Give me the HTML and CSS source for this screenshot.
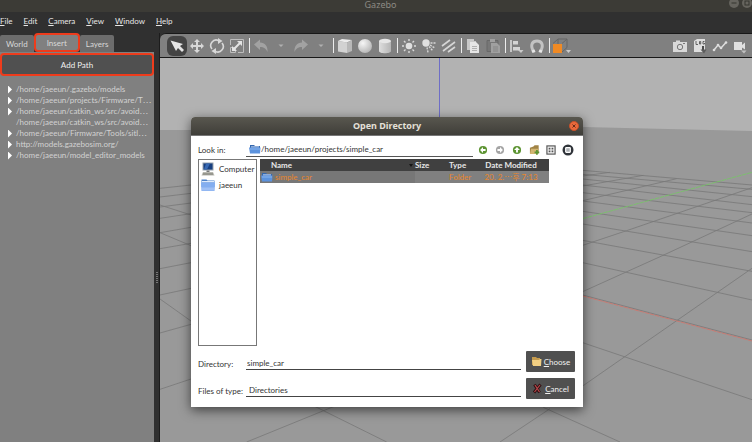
FILE: index.html
```html
<!DOCTYPE html>
<html lang="en">
<head>
<meta charset="utf-8">
<title>Gazebo</title>
<link rel="stylesheet" href="styles.css">
</head>
<body>
<div class="app">
  <header class="titlebar">
    <span class="app-name">Gazebo</span>
    <span class="window-buttons">
      <button aria-label="Minimize"><svg width="10" height="10" viewBox="0 0 10 10"><circle cx="5" cy="5" r="5" fill="#66645e"/><path d="M2.500 5h5" stroke="#35342f"/></svg></button>
      <button aria-label="Maximize"><svg width="10" height="10" viewBox="0 0 10 10"><circle cx="5" cy="5" r="5" fill="#66645e"/><rect x="3" y="3" width="4" height="4" fill="none" stroke="#35342f"/></svg></button>
    </span>
  </header>
  <nav class="menubar">
    <button><u>F</u>ile</button>
    <button><u>E</u>dit</button>
    <button><u>C</u>amera</button>
    <button><u>V</u>iew</button>
    <button><u>W</u>indow</button>
    <button><u>H</u>elp</button>
  </nav>
  <main class="workspace">
    <aside class="side">
      <div class="tabs">
        <button class="tab">World</button>
        <button class="tab tab-active">Insert</button>
        <button class="tab">Layers</button>
      </div>
      <div class="panel">
        <button class="add-path">Add Path</button>
        <ul class="tree">
          <li class="branch">/home/jaeeun/.gazebo/models</li>
          <li class="branch">/home/jaeeun/projects/Firmware/T⋯</li>
          <li class="branch">/home/jaeeun/catkin_ws/src/avoid⋯</li>
          <li>/home/jaeeun/catkin_ws/src/avoid⋯</li>
          <li class="branch">/home/jaeeun/Firmware/Tools/sitl⋯</li>
          <li class="branch">http://models.gazebosim.org/</li>
          <li class="branch">/home/jaeeun/model_editor_models</li>
        </ul>
      </div>
    </aside>
    <div class="splitter"><span class="grip"></span></div>
    <section class="view">
      <div class="toolbar">
        <button class="tool tool-on" aria-label="Select"><svg viewBox="0 0 16 16"><path d="M1.500 2.500 14 6l-3 2 4 4-2 2-4-4-2 3z" fill="#e4e4e4"/></svg></button>
        <button class="tool" aria-label="Translate"><svg viewBox="0 0 16 16"><path d="M8 1l3 3H9v3h3V5l3 3-3 3V9H9v3h2l-3 3-3-3h2V9H4v2L1 8l3-3v2h3V4H5z" fill="#d8d8d8"/></svg></button>
        <button class="tool" aria-label="Rotate"><svg viewBox="0 0 16 16"><path d="M3 11A5.500 5.500 0 0 1 9.500 2.500M13 5A5.500 5.500 0 0 1 6.500 13.500" fill="none" stroke="#d8d8d8" stroke-width="1.600"/><path d="M9 0l4.500 3L9 6zM7 10l-4.500 3L7 16z" fill="#d8d8d8"/></svg></button>
        <button class="tool" aria-label="Scale"><svg viewBox="0 0 16 16"><path d="M1.500 7V1.500h13v13H9M1.500 9.500h5v5h-5z" fill="none" stroke="#bdbdbd"/><path d="M5 11l6-6" stroke="#e4e4e4" stroke-width="2"/><path d="M8 3h5v5zM3 8v5h5z" fill="#e4e4e4"/></svg></button>
        <span class="sep"></span>
        <button class="tool" aria-label="Undo"><svg viewBox="0 0 16 16"><path d="M1 6.500 7 1.500v3c5 0 8 4 7.500 9.500C13 10.500 11 9 7 9v3z" fill="#a2a2a2"/></svg></button>
        <button class="tool" aria-label="Undo history"><svg viewBox="0 0 16 16"><path d="M5.500 6.500h5L8 9z" fill="#b0b0b0"/></svg></button>
        <button class="tool" aria-label="Redo"><svg viewBox="0 0 16 16"><path d="M15 6.500 9 1.500v3C4 4.500 1 8.500 1.500 14 3 10.500 5 9 9 9v3z" fill="#a2a2a2"/></svg></button>
        <button class="tool" aria-label="Redo history"><svg viewBox="0 0 16 16"><path d="M5.500 6.500h5L8 9z" fill="#b0b0b0"/></svg></button>
        <span class="sep"></span>
        <button class="tool" aria-label="Box"><svg viewBox="0 0 16 16"><path d="M1 3l9 1.500V15L1 13.500z" fill="#d2d2d2"/><path d="M1 3l4-2 10 1-5 2.500z" fill="#ececec"/><path d="M10 4.500 15 2v11l-5 2z" fill="#b8b8b8"/></svg></button>
        <button class="tool" aria-label="Sphere"><svg viewBox="0 0 16 16"><defs><radialGradient id="ball" cx=".35" cy=".3" r=".7"><stop offset="0" stop-color="#f6f6f6"/><stop offset="1" stop-color="#bababa"/></radialGradient></defs><circle cx="8" cy="8" r="7" fill="url(#ball)"/></svg></button>
        <button class="tool" aria-label="Cylinder"><svg viewBox="0 0 16 16"><defs><linearGradient id="can"><stop offset="0" stop-color="#dedede"/><stop offset="1" stop-color="#b5b5b5"/></linearGradient></defs><path d="M2 3v10c0 3 12 3 12 0V3z" fill="url(#can)"/><ellipse cx="8" cy="3" rx="6" ry="2.200" fill="#e6e6e6"/></svg></button>
        <span class="sep"></span>
        <button class="tool" aria-label="Point light"><svg viewBox="0 0 16 16"><circle cx="8" cy="8" r="3.300" fill="#e0e0e0"/><path d="M8 1v2M8 13v2M1 8h2M13 8h2M3 3l1.500 1.500M11.500 11.500 13 13M13 3l-1.500 1.500M4.500 11.500 3 13" stroke="#dadada" stroke-width="1.400"/></svg></button>
        <button class="tool" aria-label="Spot light"><svg viewBox="0 0 16 16"><circle cx="5" cy="5" r="3.700" fill="#e0e0e0"/><path d="M9.500 5h5M9 7l5 3M8 8.500l4 4.500M6 9.500l1 5" stroke="#d6d6d6" stroke-width="1.400" stroke-dasharray="2 1"/></svg></button>
        <button class="tool" aria-label="Directional light"><svg viewBox="0 0 16 16"><path d="M1 8l8-6M2 13 14 4M7 14l7-5" stroke="#d6d6d6" stroke-width="1.600"/></svg></button>
        <span class="sep"></span>
        <button class="tool" aria-label="Copy"><svg viewBox="0 0 16 16"><path d="M2 1h7v2h2v9H2z" fill="#c9c9c9"/><path d="M5 4h6l3 3v8H5z" fill="#e6e6e6"/><path d="M7 8.500h5M7 10.500h5M7 12.500h5" stroke="#b0b0b0"/></svg></button>
        <button class="tool" aria-label="Paste"><svg viewBox="0 0 16 16"><path d="M2 2.500h11v11H2z" fill="#777" stroke="#686868"/><path d="M5 1h5v3H5zM6 5h6l3 3v7H6z" fill="#a0a0a0"/><path d="M8 9h5M8 11h5M8 13h5" stroke="#868686"/></svg></button>
        <span class="sep"></span>
        <button class="tool" aria-label="Align"><svg viewBox="0 0 16 16"><path d="M2 2v12" stroke="#dedede" stroke-width="1.500"/><path d="M4 3h5v3.500H4zM4 9h7v3.500H4z" fill="#d4d4d4"/><path d="M9 12h5.500L12 15z" fill="#cacaca"/></svg></button>
        <button class="tool" aria-label="Snap"><svg viewBox="0 0 16 16"><path d="M4.500 13.500C.5 6 4 3 8 3s7.500 3 3.500 10.500" fill="none" stroke="#c2c2c2" stroke-width="3"/><path d="M2.500 12.500l3-1 1 2.500-3 1zM13.500 12.500l-3-1-1 2.500 3 1z" fill="#e6e6e6"/></svg></button>
        <span class="sep"></span>
        <button class="tool" aria-label="View angle"><svg class="wide-icon" viewBox="0 0 19 16"><path d="M1 5.500 6 1h9L10 5.500M15 1v8.500L10 14M6 1v5" fill="none" stroke="#656565"/><path d="M1 6h9v9H1z" fill="#f08a24"/><path d="M14 12h5l-2.500 3z" fill="#cacaca"/></svg></button>
        <span class="spring"></span>
        <button class="tool" aria-label="Screenshot"><svg viewBox="0 0 16 16"><path d="M1 4h3V2.500h4V4h7v10H1z" fill="#d9d9d9"/><circle cx="8" cy="9" r="2.700" fill="#d9d9d9" stroke="#777"/><path d="M11 5.500h2" stroke="#777"/></svg></button>
        <button class="tool" aria-label="Log data"><svg viewBox="0 0 16 16"><path d="M2 3l3-2h8v13H2z" fill="#dedede"/><path d="M4 3v3.500h2M7.500 3.500h1.200v2.500H7.500zM12.500 3.500H11V6h1.500V5" fill="none" stroke="#555" stroke-width=".9"/><path d="M11 8v4" stroke="#4a4a4a" stroke-width="2"/><path d="M8.500 11.500h6L12 15.500z" fill="#5c5c5c"/></svg></button>
        <button class="tool" aria-label="Plot"><svg viewBox="0 0 16 16"><path d="M2 12l4-5 3 3 5-5.500" fill="none" stroke="#dedede" stroke-width="1.500"/><circle cx="2" cy="12" r="1.300" fill="#dedede"/><circle cx="6" cy="7" r="1.300" fill="#dedede"/><circle cx="9" cy="10" r="1.300" fill="#dedede"/><circle cx="14" cy="4.500" r="1.300" fill="#dedede"/></svg></button>
        <button class="tool" aria-label="Record video"><svg viewBox="0 0 16 16"><path d="M2 4h8v3l3-2.500v7L10 9.500V12H2z" fill="#e0e0e0"/><path d="M9 12.500h5.500L12 15.500z" fill="#c0c0c0"/></svg></button>
      </div>
      <svg class="scene" viewBox="160 58 592 384" preserveAspectRatio="xMinYMin slice" aria-hidden="true">
        <rect x="160" y="58" width="592" height="384" fill="#b2b2b2"/>
        <path d="M160 130H191L583 127 752 131V442H160z" fill="#999"/>
        <path d="M439.500 58v70" stroke="#6e6ec6"/>
        <g transform="translate(560 50) scale(.33333)" fill="none" stroke="#7a7a7a" stroke-width="2.500">
          <path d="M68 361 576 405M68 373 576 418M68 387 576 440M68 405 576 464M68 428 576 488M68 453 576 519M68 484 576 557M68 522 576 605M68 571 576 664M68 638 576 750M68 735 576 870M68 878 576 1049M-50 1072 180 1176"/>
          <path d="M68 378 150 367M68 408 250 376M68 452 350 386M68 586 200 542 576 413M68 725 305 618 576 492M68 1008 576 655M-30 1076-180 1176"/>
          <path d="M68 738 576 873" stroke="#d2756b" stroke-dasharray="14 2"/>
          <path d="M68 506 576 367" stroke="#76c765" stroke-dasharray="14 2"/>
        </g>
        <g transform="translate(130 240) scale(.33333)" fill="none" stroke="#7a7a7a" stroke-width="2.500">
          <path d="M90 26 183 10M90 86 183 68M90 165 183 145M90 279 183 253M90 448 183 417M90 177 183 243M90-22 183 17M90-22 183-38M90-65 183-79M90-99 183-111M90-129 183-140M90-155 183-165M90-105 183-75M350 606 630 492M540 492 770 606"/>
        </g>
      </svg>
    </section>
  </main>

  <form class="dialog" role="dialog" aria-labelledby="dialog-title">
    <div class="dialog-bar">
      <span id="dialog-title" class="dialog-title">Open Directory</span>
      <button type="button" class="close" aria-label="Close"><svg width="10" height="10" viewBox="0 0 10 10"><circle cx="5" cy="5" r="4.500" fill="#ea6a3c" stroke="#c4502b"/><path d="M3.500 3.500l3 3m0-3l-3 3" stroke="#6a2b18"/></svg></button>
    </div>
    <div class="dialog-body">
      <div class="look-row">
        <label class="label" for="look">Look in:</label>
        <div class="path-field">
          <svg width="12" height="10" viewBox="0 0 12 10"><path d="M1 1h4l1 1h5v5H1z" fill="#3467ae"/><path d="M2 2.500h8v1H2z" fill="#e8f0fc"/><path d="M0 3.500h11.500L11 9.500H1z" fill="#5b92dd"/><path d="M1 5h10" stroke="#8ab5ee"/></svg>
          <input id="look" type="text" value="/home/jaeeun/projects/simple_car">
        </div>
        <div class="nav-buttons">
          <button type="button" aria-label="Back"><svg viewBox="0 0 12 12"><circle cx="6" cy="6" r="3.500" fill="#5d9432"/><path d="M3.500 6 6 3.500v1.700h2.200v1.600H6v1.700z" fill="#fff"/></svg></button>
          <button type="button" aria-label="Forward"><svg viewBox="0 0 12 12"><circle cx="6" cy="6" r="3.500" fill="#a4a4a4"/><path d="M8.500 6 6 3.500v1.700H3.800v1.600H6v1.700z" fill="#fff"/></svg></button>
          <button type="button" aria-label="Parent directory"><svg viewBox="0 0 12 12"><circle cx="6" cy="6" r="3.500" fill="#5d9432"/><path d="M6 3.500 3.500 6h1.700v2.200h1.600V6h1.700z" fill="#fff"/></svg></button>
          <button type="button" aria-label="New folder"><svg viewBox="0 0 12 12"><path d="M2.500 4l3-1 1-1H10v7H2.500z" fill="#a18446"/><path d="M3.500 5H10L8 9.500H2.500z" fill="#d3b571"/><path d="M8.500 6v4M6.500 8h4" stroke="#5d9432" stroke-width="1.500"/></svg></button>
          <button type="button" aria-label="List view"><svg viewBox="0 0 12 12"><rect x="2.500" y="2.500" width="7" height="7" fill="#f5f5f5" stroke="#555"/><path d="M4 4h1.500v1.500H4zM6.500 4H8v1.500H6.500zM4 6.500h1.500V8H4zM6.500 6.500H8V8H6.500z" fill="#555"/></svg></button>
          <button type="button" aria-label="Detail view"><svg viewBox="0 0 12 12"><circle cx="6" cy="6" r="4.700" fill="#30343a"/><rect x="3.500" y="3.500" width="5" height="5" rx="1" fill="#fff"/><path d="M4.500 5.200h3M4.500 6.800h3" stroke="#646a72" stroke-width=".8"/></svg></button>
        </div>
      </div>
      <div class="browser">
        <ul class="places">
          <li><svg width="14" height="14" viewBox="0 0 14 14"><path d="M1.500.5h11v8h-11z" fill="#98a2ac"/><path d="M2.500 1.500h9v6h-9z" fill="#173f80"/><path d="M5 1.500h4l-3 6H3z" fill="#3769b3"/><path d="M5.500 8.500h3v1.500h-3z" fill="#777"/><path d="M2 10h10l1.500 3.500H.5z" fill="#b8b8b0"/><path d="M2 12h10" stroke="#77776f"/></svg>Computer</li>
          <li><svg width="14" height="14" viewBox="0 0 14 14"><path d="M.5 1.500h5l1 1h7V9H.5z" fill="#4d82c9"/><path d="M1 3h12v1.500H1z" fill="#e0ebfb"/><path d="M0 4.500h14L13.500 13H.5z" fill="#84aef0"/><path d="M1 9.500h12v3H1z" fill="#a0c0f5"/></svg>jaeeun</li>
        </ul>
        <div class="files">
          <table>
            <colgroup><col class="c-name"><col class="c-size"><col class="c-type"><col class="c-date"></colgroup>
            <thead><tr><th class="name-head">Name<span class="sort"></span></th><th>Size</th><th>Type</th><th>Date Modified</th></tr></thead>
            <tbody><tr><td class="name-cell"><svg width="12" height="10" viewBox="0 0 12 10"><path d="M1 1h4l1 1h5v5H1z" fill="#3467ae"/><path d="M2 2.500h8v1H2z" fill="#e8f0fc"/><path d="M0 3.500h11.500L11 9.500H1z" fill="#5b92dd"/><path d="M1 5h10" stroke="#8ab5ee"/></svg>simple_car</td><td></td><td>Folder</td><td>20. 2.⋯후 7:13</td></tr></tbody>
          </table>
        </div>
      </div>
      <div class="choice">
        <label class="label" for="directory">Directory:</label>
        <input id="directory" class="line-field" type="text" value="simple_car">
        <button type="button" class="action"><svg width="11" height="11" viewBox="0 0 11 11"><path d="M1 1h4l1 1h3v7H1z" fill="#c59b4e"/><path d="M1 4h7l1-1h1.500L10 10H2z" fill="#f2cf83"/></svg><span><u>C</u>hoose</span></button>
        <label class="label" for="types">Files of type:</label>
        <select id="types" class="line-field type-field"><option>Directories</option></select>
        <button type="button" class="action"><svg width="11" height="11" viewBox="0 0 11 11"><path d="M2.500 1.500 7.500 9.500M8.500 1.500 2 9.500" stroke="#301012" stroke-width="3"/><path d="M3 2l4.500 7M8 2 2.500 9" stroke="#b8474b" stroke-width="1.200"/></svg><span><u>C</u>ancel</span></button>
      </div>
    </div>
  </form>
</div>
</body>
</html>
```
FILE: styles.css
```css
* { box-sizing: border-box; }

body {
  margin: 0;
  background: #303030;
  font-family: Lato, "Noto Sans CJK KR", sans-serif;
  font-size: 8px;
  line-height: 12px;
}

button, input, select {
  margin: 0;
  padding: 0;
  border: 0;
  background: none;
  color: inherit;
  font: inherit;
}

ul { margin: 0; padding: 0; list-style: none; }
svg { display: block; flex: none; }
u { text-underline-offset: 1px; }

.app {
  position: relative;
  display: flex;
  flex-direction: column;
  height: 100vh;
  overflow: hidden;
}

/* Main window frame */
.titlebar {
  display: flex;
  flex: none;
  height: 12px;
  padding-left: 9px;
  background: #3c3b36;
  color: #8c8a84;
  font-family: "Noto Sans", sans-serif;
  font-size: 9px;
  line-height: 9px;
}
.app-name { flex: 1; text-align: center; }
.window-buttons {
  position: absolute;
  top: -2px;
  right: 0;
  display: flex;
  gap: 3px;
}

.menubar {
  display: flex;
  flex: none;
  gap: 11px;
  height: 21px;
  padding-bottom: 4px;
  align-items: center;
  background: #303030;
  color: #e6e6e6;
}

.workspace { display: flex; flex: 1; min-height: 0; }

/* Left panel */
.side { display: flex; flex: none; flex-direction: column; width: 154px; }
.tabs { display: flex; height: 19px; align-items: flex-end; }
.tab {
  height: 17px;
  padding: 0 6px;
  border-radius: 2px 2px 0 0;
  background: #6c6c6c;
  color: #d8d8d8;
}
.tab-active {
  height: 19px;
  padding: 0 11px;
  border: 2px solid #ee3c1c;
  border-radius: 4px;
  background: #808080;
}
.panel { flex: 1; padding-top: 1px; background: #808080; }
.add-path {
  display: block;
  width: 100%;
  height: 23px;
  border: 2px solid #ee3c1c;
  border-radius: 4px;
  background: #505050;
  color: #f0f0f0;
}
.tree { padding: 8px 0 0 8px; color: #d2d2d2; line-height: 11px; }
.tree li { padding-left: 8px; white-space: nowrap; }
.tree .branch { padding-left: 0; display: flex; align-items: center; }
.branch::before {
  content: "";
  flex: none;
  width: 4px;
  height: 8px;
  margin-right: 4px;
  background: #fff;
  clip-path: polygon(0 0, 100% 50%, 0 100%);
}

.splitter {
  display: flex;
  flex: none;
  width: 6px;
  padding-top: 80px;
  align-items: center;
  justify-content: center;
  background: #303030;
  border-right: 1px solid #1c1c1c;
}
.grip {
  width: 2px;
  height: 11px;
  background: repeating-linear-gradient(#777 0 1px, #303030 1px 2px);
}

/* 3D view */
.view { display: flex; flex: 1; flex-direction: column; min-width: 0; }
.toolbar {
  display: flex;
  flex: none;
  height: 25px;
  padding: 0 2px 0 7px;
  align-items: center;
  border-top: 1px solid #181818;
  border-bottom: 1px solid #181818;
  border-radius: 6px 0 0 0;
  background: #808080;
}
.tool {
  display: flex;
  flex: none;
  width: 20px;
  height: 20px;
  align-items: center;
  justify-content: center;
}
.tool svg { width: 16px; height: 16px; }
.tool .wide-icon { width: 19px; height: 16px; }
.tool-on { border-radius: 6px; background: #444; }
.sep { flex: none; width: 1px; height: 15px; margin: 0 1px 0 2px; background: #ececec; }
.spring { flex: 1; }
.scene { flex: 1; width: 100%; min-height: 0; }

/* File dialog */
.dialog {
  position: absolute;
  top: 117px;
  left: 191px;
  width: 392px;
  border-radius: 4px 4px 0 0;
  background: #fff;
  color: #333;
  box-shadow: 0 3px 12px rgba(0, 0, 0, .6);
}
.dialog-bar {
  display: flex;
  height: 19px;
  padding: 0 4px 0 14px;
  align-items: center;
  border-bottom: 1px solid #777;
  border-radius: 4px 4px 0 0;
  background: linear-gradient(#59574f, #3f3e39);
  color: #e4e0d8;
}
.dialog-title {
  flex: 1;
  font-family: "Noto Sans", sans-serif;
  font-size: 9px;
  font-weight: 700;
  text-align: center;
}
.dialog-body { padding: 6px 8px 8px 7px; }
.label { width: 48px; white-space: nowrap; }

.look-row { display: flex; height: 15px; align-items: center; }
.path-field {
  display: flex;
  flex: 1;
  height: 14px;
  padding-left: 3px;
  align-items: center;
  border-bottom: 1px solid #555;
}
.path-field input { flex: 1; min-width: 0; height: 12px; }
.nav-buttons { display: flex; gap: 3px; padding-left: 3px; }
.nav-buttons svg { width: 14px; height: 14px; }

.browser { display: flex; gap: 3px; padding-top: 2px; }
.places {
  flex: none;
  width: 59px;
  height: 187px;
  padding: 1px 2px;
  border: 1px solid #777;
}
.places li { display: flex; height: 16px; gap: 4px; align-items: center; }

.files { flex: 1; }
table { width: 289px; border-collapse: collapse; table-layout: fixed; }
th, td { height: 12px; padding: 0; line-height: 12px; text-align: left; white-space: nowrap; }
th { background: #404040; color: #e8e8e8; font-weight: 700; }
td { background: #808080; color: #e8862c; }
th:nth-child(4), td:nth-child(4) { text-align: center; padding-right: 10px; }
th:nth-child(3), td:nth-child(3) { padding-left: 2px; }
.c-name { width: 155px; }
.c-size { width: 32px; }
.c-type { width: 36px; }
.name-head { padding-left: 11px; }
.sort { float: right; width: 4px; height: 3px; margin: 5px 2px 0 0; background: #151515; clip-path: polygon(0 0, 100% 0, 50% 100%); }
.name-cell { display: flex; gap: 2px; padding-left: 1px; align-items: center; background: #777; }

.choice {
  display: grid;
  grid-template-columns: 48px 1fr 49px;
  gap: 6px 0;
  padding-top: 5px;
  align-items: center;
}
.choice .label { padding-top: 4px; }
.line-field {
  width: auto;
  min-width: 0;
  height: 17px;
  margin-right: 5px;
  padding: 3px 0 0 1px;
  border-bottom: 1px solid #444;
  border-radius: 0;
  appearance: none;
}
.type-field { padding-left: 3px; }
.action {
  display: flex;
  height: 21px;
  gap: 2px;
  align-items: center;
  justify-content: center;
  border-radius: 1px;
  background: #505050;
  color: #f0f0f0;
}
```
